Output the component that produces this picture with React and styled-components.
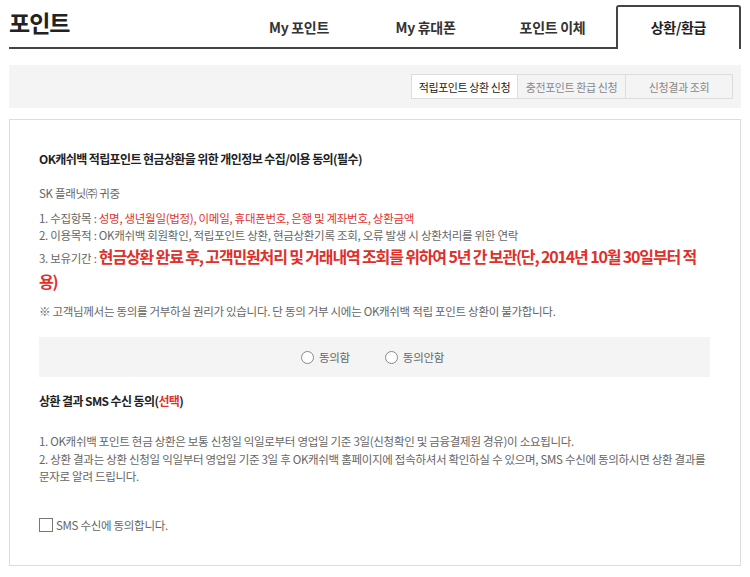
import React from 'react';
import styled, { createGlobalStyle, css } from 'styled-components';

const GlobalStyle = createGlobalStyle`
  html, body { margin: 0; padding: 0; background: #fff; }
  body {
    font-family: "Noto Sans CJK KR", "Noto Sans", sans-serif;
    color: #666;
  }
  *, *::before, *::after { box-sizing: border-box; }
`;

const Page = styled.div`
  width: 741px;
  padding-left: 9px;
`;

const Header = styled.header`
  display: flex;
  align-items: stretch;
  height: 49px;
`;

const Title = styled.h1`
  flex: 1;
  margin: 0;
  border-bottom: 2px solid #444;
  font-size: 23px;
  font-weight: 700;
  line-height: 44px;
  letter-spacing: -1px;
  color: #222;
`;

const Tab = styled.div`
  width: ${(p) => p.$w}px;
  display: flex;
  align-items: center;
  justify-content: center;
  font-size: 14px;
  font-weight: 700;
  letter-spacing: -0.3px;
  color: #333;
  ${(p) =>
    p.$active
      ? css`
          margin-top: 5px;
          border: 2px solid #444;
          border-bottom: none;
          border-radius: 3px 3px 0 0;
          padding-bottom: 2px;
          color: #222;
        `
      : css`
          border-bottom: 2px solid #444;
          padding-top: 6px;
        `}
`;

const SubBar = styled.nav`
  margin-top: 16px;
  height: 43px;
  background: #f4f4f4;
  display: flex;
  justify-content: flex-end;
  align-items: center;
  padding-right: 8px;
`;

const SubGroup = styled.div`
  display: flex;
  border: 1px solid #ddd;
`;

const SubBtn = styled.div`
  width: ${(p) => p.$w}px;
  height: 23px;
  display: flex;
  align-items: center;
  justify-content: center;
  font-size: 11px;
  letter-spacing: -0.4px;
  color: ${(p) => (p.$active ? '#222' : '#888')};
  background: ${(p) => (p.$active ? '#fff' : '#f4f4f4')};
  & + & {
    border-left: 1px solid #ddd;
  }
`;

const Box = styled.section`
  margin-top: 11px;
  border: 1px solid #ddd;
  padding: 30px 30px 31px 29px;
`;

const SectionTitle = styled.h2`
  margin: 0;
  font-size: 12px;
  font-weight: 700;
  line-height: 18px;
  letter-spacing: -0.6px;
  color: #222;
`;

const Red = styled.span`
  color: #e2332b;
`;

const BigRed = styled.span`
  color: #e0302a;
  font-size: 16px;
  font-weight: 700;
  letter-spacing: -1.15px;
`;

const Para = styled.p`
  margin: ${(p) => p.$mt || 0}px 0 0;
  font-size: 11.5px;
  line-height: 17px;
  letter-spacing: -0.3px;
  color: #666;
`;

const InfoList = styled.ul`
  list-style: none;
  margin: 8px 0 0;
  padding: 0;
`;

const InfoItem = styled.li`
  font-size: 11.5px;
  line-height: ${(p) => (p.$big ? 23 : 17)}px;
  margin-top: ${(p) => (p.$big ? 1 : 0)}px;
  letter-spacing: -0.3px;
  color: #666;
`;

const ConsentBox = styled.div`
  margin-top: 17px;
  height: 40px;
  background: #f4f4f4;
  display: flex;
  justify-content: center;
  align-items: center;
  gap: 35px;
  padding-right: 4px;
`;

const Choice = styled.label`
  display: flex;
  align-items: center;
  gap: 5px;
  font-size: 11.5px;
  letter-spacing: -0.3px;
  color: #666;
`;

const Radio = styled.input.attrs({ type: 'radio' })`
  appearance: none;
  margin: 0;
  width: 13px;
  height: 13px;
  border: 1px solid #888;
  border-radius: 50%;
  background: #fff;
`;

const Check = styled.input.attrs({ type: 'checkbox' })`
  appearance: none;
  margin: 0;
  width: 14px;
  height: 14px;
  border: 1px solid #777;
  background: #fff;
`;

const SmsTitle = styled(SectionTitle)`
  margin-top: 15px;
`;

const Notes = styled.div`
  margin-top: 23px;
  font-size: 11.5px;
  line-height: 17.5px;
  letter-spacing: -0.3px;
  color: #666;
`;

const CheckRow = styled.label`
  margin-top: 31px;
  display: flex;
  align-items: center;
  gap: 3px;
  height: 17px;
  font-size: 11.5px;
  letter-spacing: -0.3px;
  color: #666;
`;

export default function App() {
  return (
    <>
      <GlobalStyle />
      <Page>
        <Header>
          <Title>포인트</Title>
          <Tab $w={126}>My 포인트</Tab>
          <Tab $w={127}>My 휴대폰</Tab>
          <Tab $w={127}>포인트 이체</Tab>
          <Tab $w={125} $active>상환/환급</Tab>
        </Header>

        <SubBar>
          <SubGroup>
            <SubBtn $w={105} $active>적립포인트 상환 신청</SubBtn>
            <SubBtn $w={108}>충전포인트 환급 신청</SubBtn>
            <SubBtn $w={107}>신청결과 조회</SubBtn>
          </SubGroup>
        </SubBar>

        <Box>
          <SectionTitle>OK캐쉬백 적립포인트 현금상환을 위한 개인정보 수집/이용 동의(필수)</SectionTitle>
          <Para $mt={17}>SK 플래닛㈜ 귀중</Para>
          <InfoList>
            <InfoItem>
              1. 수집항목 : <Red>성명, 생년월일(법정), 이메일, 휴대폰번호, 은행 및 계좌번호, 상환금액</Red>
            </InfoItem>
            <InfoItem>
              2. 이용목적 : OK캐쉬백 회원확인, 적립포인트 상환, 현금상환기록 조회, 오류 발생 시 상환처리를 위한 연락
            </InfoItem>
            <InfoItem $big>
              3. 보유기간 : <BigRed>현금상환 완료 후, 고객민원처리 및 거래내역 조회를 위하여 5년 간 보관(단, 2014년 10월 30일부터 적<br />용)</BigRed>
            </InfoItem>
          </InfoList>
          <Para $mt={8}>
            ※ 고객님께서는 동의를 거부하실 권리가 있습니다. 단 동의 거부 시에는 OK캐쉬백 적립 포인트 상환이 불가합니다.
          </Para>

          <ConsentBox>
            <Choice>
              <Radio name="agree" />
              동의함
            </Choice>
            <Choice>
              <Radio name="agree" />
              동의안함
            </Choice>
          </ConsentBox>

          <SmsTitle>
            상환 결과 SMS 수신 동의(<Red>선택</Red>)
          </SmsTitle>
          <Notes>
            1. OK캐쉬백 포인트 현금 상환은 보통 신청일 익일로부터 영업일 기준 3일(신청확인 및 금융결제원 경유)이 소요됩니다.
            <br />
            2. 상환 결과는 상환 신청일 익일부터 영업일 기준 3일 후 OK캐쉬백 홈페이지에 접속하셔서 확인하실 수 있으며, SMS 수신에 동의하시면 상환 결과를
            <br />
            문자로 알려 드립니다.
          </Notes>

          <CheckRow>
            <Check />
            SMS 수신에 동의합니다.
          </CheckRow>
        </Box>
      </Page>
    </>
  );
}
